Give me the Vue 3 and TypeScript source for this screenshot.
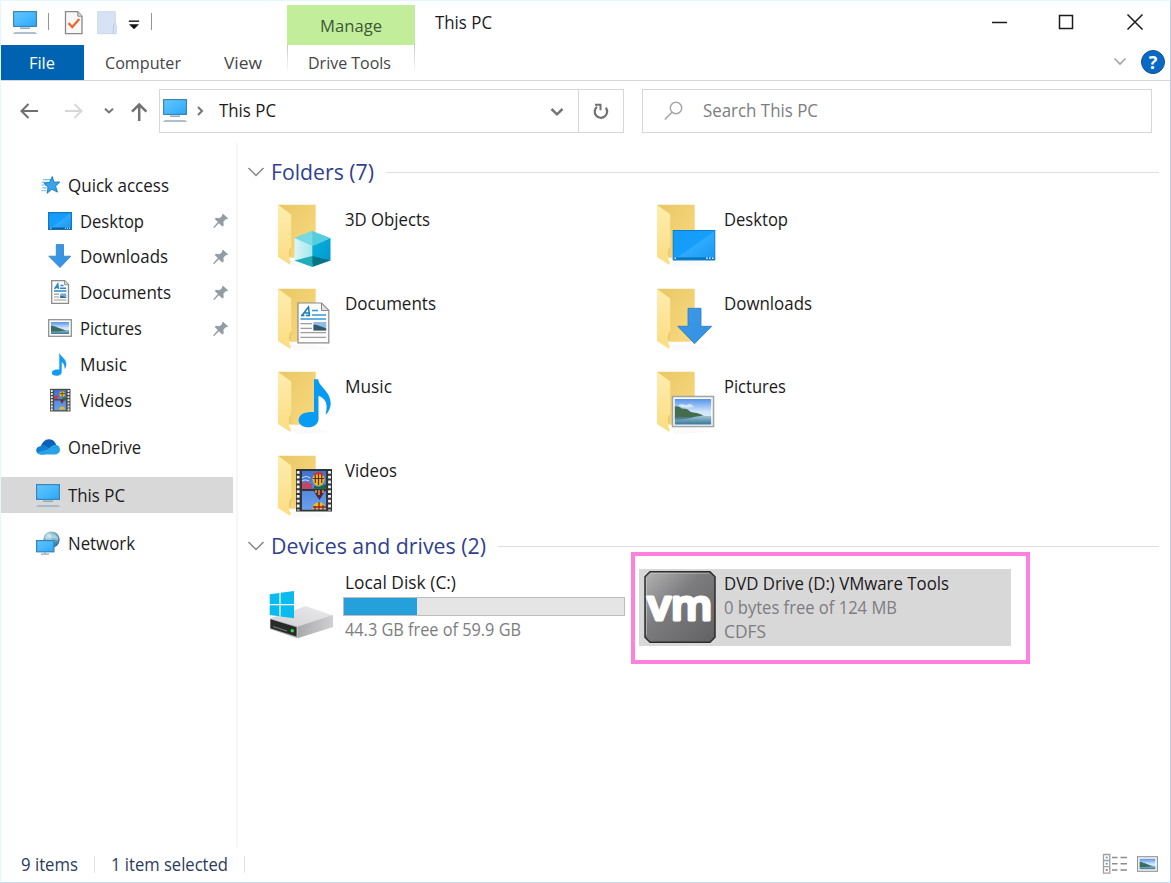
<script setup lang="ts">
interface NavItem {
  label: string
  icon: string
  width: number
  nested?: boolean
  pinned?: boolean
  selected?: boolean
  spaced?: boolean
}

interface Folder {
  label: string
  icon: string
  width: number
}

const navItems: NavItem[] = [
  { label: 'Quick access', icon: 'i-star', width: 101 },
  { label: 'Desktop', icon: 'i-desk', width: 64, nested: true, pinned: true },
  { label: 'Downloads', icon: 'i-down', width: 88, nested: true, pinned: true },
  { label: 'Documents', icon: 'i-doc', width: 91, nested: true, pinned: true },
  { label: 'Pictures', icon: 'i-pic', width: 62, nested: true, pinned: true },
  { label: 'Music', icon: 'i-music', width: 47, nested: true },
  { label: 'Videos', icon: 'i-video', width: 52, nested: true },
  { label: 'OneDrive', icon: 'i-cloud', width: 73, spaced: true },
  { label: 'This PC', icon: 'i-pc', width: 57, spaced: true, selected: true },
  { label: 'Network', icon: 'i-net', width: 67, spaced: true },
]

const folders: Folder[] = [
  { label: '3D Objects', icon: 'b-cube', width: 85 },
  { label: 'Desktop', icon: 'b-desk', width: 64 },
  { label: 'Documents', icon: 'b-doc', width: 91 },
  { label: 'Downloads', icon: 'b-down', width: 88 },
  { label: 'Music', icon: 'b-music', width: 47 },
  { label: 'Pictures', icon: 'b-pic', width: 62 },
  { label: 'Videos', icon: 'b-video', width: 52 },
]

const usedPercent = 26.2

// Condenses a label horizontally so that it fills the given width.
const vFit = {
  mounted(el: HTMLElement, binding: { value: number }) {
    const natural = el.getBoundingClientRect().width
    if (!natural) return
    el.style.transform = `scaleX(${binding.value / natural})`
    el.style.marginRight = `${binding.value - natural}px`
  },
}
</script>

<template>
  <div class="window">
    <svg class="defs" width="0" height="0">
      <defs>
        <linearGradient id="screen" x1="0" y1="0" x2="1" y2="1">
          <stop offset="0" stop-color="#62c5fd" /><stop offset=".5" stop-color="#48b9ff" /><stop offset="1" stop-color="#2aa6f8" />
        </linearGradient>
        <linearGradient id="deskfill" x1="0" y1="0" x2="1" y2="1">
          <stop offset="0" stop-color="#129cf8" /><stop offset=".5" stop-color="#159ffb" /><stop offset=".52" stop-color="#2eabff" /><stop offset="1" stop-color="#1597f2" />
        </linearGradient>
        <linearGradient id="fback" x1="0" y1="0" x2="1" y2="1">
          <stop offset="0" stop-color="#e9c765" /><stop offset="1" stop-color="#f9da80" />
        </linearGradient>
        <linearGradient id="ffront" x1="0" y1="0" x2="0" y2="1">
          <stop offset="0" stop-color="#ffedaf" /><stop offset="1" stop-color="#fbdc80" />
        </linearGradient>
        <linearGradient id="bluearrow" x1="0" y1="0" x2="1" y2="1">
          <stop offset="0" stop-color="#3b9ae6" /><stop offset="1" stop-color="#3590e2" />
        </linearGradient>
        <linearGradient id="sky" x1="0" y1="0" x2="0" y2="1">
          <stop offset="0" stop-color="#5792eb" /><stop offset=".5" stop-color="#cfe7fa" /><stop offset="1" stop-color="#e8f3f7" />
        </linearGradient>
        <linearGradient id="lake" x1="0" y1="0" x2="0" y2="1">
          <stop offset="0" stop-color="#9fc3cf" /><stop offset="1" stop-color="#36779b" />
        </linearGradient>
        <linearGradient id="film" x1="0" y1="0" x2="0" y2="1">
          <stop offset="0" stop-color="#3f72d0" /><stop offset="1" stop-color="#6ba0ec" />
        </linearGradient>
        <linearGradient id="cubeL" x1="0" y1="0" x2="1" y2="0">
          <stop offset="0" stop-color="#daf6f8" /><stop offset="1" stop-color="#a3e7ef" />
        </linearGradient>
        <linearGradient id="cubeR" x1="0" y1="0" x2="1" y2="1">
          <stop offset="0" stop-color="#00b7dc" /><stop offset="1" stop-color="#0592cf" />
        </linearGradient>
        <linearGradient id="vmfill" x1="0" y1="0" x2="1" y2="1">
          <stop offset="0" stop-color="#b4b4b5" /><stop offset=".42" stop-color="#7c7c7e" /><stop offset="1" stop-color="#616163" />
        </linearGradient>
        <linearGradient id="driveSide" x1="0" y1="0" x2="1" y2="0">
          <stop offset="0" stop-color="#a9a9ac" /><stop offset="1" stop-color="#d0d0d3" />
        </linearGradient>
        <linearGradient id="driveTop" x1="0" y1="1" x2="1" y2="0">
          <stop offset="0" stop-color="#d2d2d5" /><stop offset="1" stop-color="#ebebed" />
        </linearGradient>
        <radialGradient id="globe" cx=".4" cy=".3" r=".8">
          <stop offset="0" stop-color="#d5edf1" /><stop offset=".4" stop-color="#78b1c9" /><stop offset="1" stop-color="#1f608f" />
        </radialGradient>
      </defs>

      <symbol id="i-pc" viewBox="0 0 24 24">
        <rect x=".6" y="1.6" width="22.8" height="14.8" fill="url(#screen)" stroke="#3c86b5" stroke-width="1.2" />
        <path d="M7 18.2h10" stroke="#87a9bf" stroke-width="1.5" />
        <path d="M2 22.600h20l1.500 1H.5z" fill="#b6c5d2" stroke="#9fb1c1" stroke-width=".8" />
      </symbol>
      <symbol id="i-star" viewBox="-4 -1.500 27 27">
        <path d="M4 6h9M2.800 9h7M2 12h7M3 15.200h6M1.800 18.500h6" stroke="#7fc0ec" stroke-width="1.300" />
        <path d="M14.300 2.500l1.900 6.300 6.500-.2-4.700 4.700 2.100 6.700-6.200-3.300-5.400 4.600 1.200-7-4.800-4.300 6.200-.8z" fill="#3aa4ea" stroke="#1c7cc3" stroke-width="1.100" />
      </symbol>
      <symbol id="i-desk" viewBox="0 0 24 24">
        <rect x=".6" y="3.600" width="22.800" height="16.800" fill="url(#deskfill)" stroke="#1277c0" stroke-width="1.200" />
        <path d="M1 19.300h22" stroke="#125d96" stroke-width="1.600" />
        <path d="M2 19.200h1.500M17 19.200h1.200M19 19.200h1.200M21 19.200h1.200" stroke="#e2f3ff" stroke-width="1" />
      </symbol>
      <symbol id="i-down" viewBox="0 0 24 24">
        <path d="M8.300.6h7.200v11.600h7.300L12 23.500.8 12.200h7.500z" fill="url(#bluearrow)" stroke="#2e7ec9" stroke-width=".8" />
      </symbol>
      <symbol id="i-doc" viewBox="0 0 24 24">
        <path d="M3.700.7h13l3.800 3.800v18.800H3.700z" fill="#fdfdfd" stroke="#8b8b8b" stroke-width="1.300" />
        <path d="M16.500.7v4h4" fill="#ddd" stroke="#8b8b8b" stroke-width=".9" />
        <path d="M6.500 9l3.300-5 .7 5M7.800 7.500H10M12.500 5.500h3M12 8.300h6M6 11h12.500" fill="none" stroke="#2687c6" stroke-width="1.400" />
        <path d="M6 14.200h5M6 17h5M6 20h12.500" stroke="#9a9a9a" stroke-width="1.200" />
        <path d="M12.300 13.500h6V18h-6z" fill="#73aada" /><path d="M12.300 15.500l6 2V18h-6z" fill="#376574" />
      </symbol>
      <symbol id="i-pic" viewBox="0 0 24 24">
        <rect x=".7" y="3.700" width="22.600" height="16.600" fill="#fff" stroke="#8e9191" stroke-width="1.300" />
        <path d="M3 6h18v12H3z" fill="url(#sky)" /><path d="M3 14h18v4H3z" fill="url(#lake)" />
        <path d="M3 9.500c3 .2 5 1.800 8 2.500l7 2.500-8 1H3z" fill="#396c5b" />
      </symbol>
      <symbol id="i-music" viewBox="0 0 24 24">
        <path d="M11.300.5c1 4.500 7 5.500 7 11.800 0 2-.6 3.500-1.600 5 0-4-1.200-6.300-3-7v9.600c0 2.300-2.400 3.800-5.200 3.800-2.700 0-4.700-1.200-4.700-3 0-2.300 3.500-3.900 7.500-3.100z" fill="#119bf2" />
      </symbol>
      <symbol id="i-video" viewBox="0 0 24 24">
        <path d="M2 .8h20.500v22.700H2z" fill="#4b4c4e" />
        <path d="M3.800 2v20.500M20.500 2v20.500" stroke="#ededed" stroke-width="1.800" stroke-dasharray="1.900 1.200" />
        <path d="M6.200 2h11.700v9H6.200zM6.200 12.500h11.700v9.800H6.200z" fill="url(#film)" />
        <path d="M6 8.500l4-1.500v4H6z" fill="#b93f62" /><path d="M15 9h3v2.300h-4z" fill="#267345" />
        <ellipse cx="14.200" cy="5.900" rx="2.700" ry="3" fill="#e5bd19" /><path d="M14.200 3v6M12 5.500h5" stroke="#7d3f21" stroke-width=".9" />
        <path d="M12 12h4l-2 4z" fill="#7b2636" /><path d="M11 21.500c0-4 6-4 6 0z" fill="#e5bd19" />
      </symbol>
      <symbol id="i-cloud" viewBox="0 0 24 24">
        <path d="M4.500 13C5.500 7.500 9 4 13.200 4.200c3.800.1 6.200 2.700 7 5.800L13 15z" fill="#0b61b9" />
        <path d="M4.200 11.200c3-1.500 5.300-.8 7.500.7l6 4.500-10 3H5C1.800 19.400.2 17.500.2 15.200c0-2.200 1.700-3.800 4-4z" fill="#117ed3" />
        <path d="M11.500 14.500c3-2.400 4.600-4.800 7.800-4.700 3 .1 4.700 2.300 4.700 5 0 2.800-2 4.600-4.700 4.600H5c-2 0-3.200-.8-4-2z" fill="#27a2e7" />
      </symbol>
      <symbol id="i-net" viewBox="0 0 24 24">
        <circle cx="15.500" cy="8.600" r="8.200" fill="url(#globe)" />
        <path d="M11 2c2 1 3.500.8 4 3l-3 1-1 3-3-2zM18 3l4 3v4l-3-2-2-2z" fill="#dceee8" opacity=".5" />
        <rect x=".6" y="9.600" width="17.300" height="11.200" fill="url(#screen)" stroke="#3982b3" stroke-width="1.200" />
        <path d="M9 21v1.800M5 23.200h8" stroke="#91a9b7" stroke-width="1.300" />
      </symbol>
      <symbol id="i-pin" viewBox="0 0 16 16">
        <path d="M10 .8l5.200 4.700-1.300.8-1.300-.1-2.200 2.600.3 3.600-1.400 1.100-3.500-3.300-4.500 4.900-.8-.1 0-.9 4.300-5L1.700 6l1.200-1.300 3.600.5 2.600-2.300-.1-1.200z" fill="#929ca4" />
      </symbol>

      <symbol id="b-folder" viewBox="0 0 62 66">
        <path d="M13 57l21-1 20 5-36 2z" fill="#000" opacity=".02" />
        <path d="M1 .8h37.700v53H13z" fill="url(#fback)" />
        <path d="M1 .8l13.200 9.700v34L12.500 47v9.500l1 .5v4L1 53z" fill="url(#ffront)" />
        <path d="M14.200 44l-1.500 3v6" fill="none" stroke="#ddbd62" stroke-width=".8" />
      </symbol>
      <symbol id="b-cube" viewBox="0 0 62 66">
        <path d="M17.500 34l17.800-7 18.200 7-18.200 8z" fill="#56cddd" /><path d="M17.500 34l17.800-7v15z" fill="#76d9e4" />
        <path d="M17.500 34l17.800 8v16l-17.800-1z" fill="url(#cubeL)" />
        <path d="M35.300 42l18.200-8v22.500L35.300 60z" fill="url(#cubeR)" />
        <path d="M17.500 56.500L35.300 52v11z" fill="#20acb8" /><path d="M35.300 52l18.200 4.500L35.300 63z" fill="#087384" />
      </symbol>
      <symbol id="b-desk" viewBox="0 0 62 66">
        <rect x="17.200" y="26.500" width="41.600" height="29.500" fill="url(#deskfill)" stroke="#0e7cc6" />
        <path d="M17.500 54.500h41" stroke="#0870b5" stroke-width="2" />
        <path d="M18.500 54.200h1.500M50.200 54.200h1.500M53 54.200h1.500M56 54.200h1.500" stroke="#dff4ff" stroke-width="1.500" />
      </symbol>
      <symbol id="b-doc" viewBox="0 0 62 66">
        <path d="M21 15h23.500l7.300 7.500v32.300H21z" fill="#fcfcfd" stroke="#8a8a8c" stroke-width="1.200" />
        <path d="M44.500 15v7.500h7.300z" fill="#e3e3e3" stroke="#8a8a8c" />
        <path d="M24 27.500h3.500M29 27.500h4M25 27.500l6.500-8.500 1 8.500M27.800 25h4.200" fill="none" stroke="#197cbe" stroke-width="1.500" />
        <path d="M35 22.500h6M35 27h14M23.500 31h25.500" stroke="#3398d4" stroke-width="1.400" />
        <path d="M23.500 35.600h11.500M23.500 40.300h11.500M23.500 44.700h25.500M23.500 49.300h25.500" stroke="#9c9da0" stroke-width="1.200" />
        <path d="M36.500 34h12.700v8.500H36.500z" fill="#8fbde9" /><path d="M36.500 36.500c4 .5 8 2 12.700 4v2H36.500z" fill="#365766" />
      </symbol>
      <symbol id="b-down" viewBox="0 0 62 66">
        <path d="M32 20.300h13v18h10.700L38.600 55.700 21.700 38.300H32z" fill="url(#bluearrow)" stroke="#287bc7" stroke-width=".8" />
      </symbol>
      <symbol id="b-music" viewBox="0 0 62 66">
        <path d="M37 8.200h4.200c.5 7.500 12.500 12 12.500 24.300 0 4-1.600 7.700-4.700 11l-.3-.7c2.700-10.500-.7-15.500-7.200-18V48c0 4.800-4.500 8.300-10.200 8.300-5.500 0-9.700-2.700-9.700-7 0-5.400 6.500-9.300 15.400-8z" fill="#079bf4" />
      </symbol>
      <symbol id="b-pic" viewBox="0 0 62 66">
        <rect x="16.500" y="25.500" width="41" height="30" fill="#fff" stroke="#a2a5a7" stroke-width="1.600" />
        <path d="M18.800 28h36.400v25.500H18.800z" fill="url(#sky)" />
        <path d="M18.800 45h36.400v8.500H18.800z" fill="url(#lake)" />
        <path d="M22 35c4-4 7 1 11-2 3 0 4 2 5 3-6 1-12 1-16-1z" fill="#edf6fd" opacity=".7" />
        <path d="M18.800 35.500c3-.5 5 .5 7 2l5 .5 4 3 7 1.200 6 2.300-12 1.700H18.800z" fill="#446d50" />
        <path d="M18.800 46c8 0 12-.5 20-.5-4 2-10 3-20 3z" fill="#3e6870" opacity=".7" />
      </symbol>
      <symbol id="b-video" viewBox="0 0 62 66">
        <path d="M19 14h36v42.500H19z" fill="#333437" />
        <path d="M21.200 16v39.500M52.500 16v39.500" stroke="#f3f3f3" stroke-width="2.800" stroke-dasharray="2.800 2" />
        <path d="M25 16h24v17.700H25zM25 36h24v18.800H25z" fill="url(#film)" />
        <path d="M25 23q4-3 8 0M25 26q3-2 7 0" stroke="#c4dcf7" stroke-width="1.200" fill="none" />
        <path d="M25 27l3 1 2-2 2 3 3-1v5.700H25z" fill="#c34667" /><path d="M37 33.700V31l5 1 7-3v4.700z" fill="#17693c" />
        <ellipse cx="41.500" cy="24.300" rx="6" ry="6.500" fill="#f0bd1b" />
        <path d="M41.500 18v12M38.300 20v8M44.700 20v8M36 23.500h11" stroke="#632d25" stroke-width="1.200" /><path d="M37 20q4.500-4 9 0" stroke="#d62d2c" stroke-width="2" fill="none" />
        <path d="M36.500 35h12l-3.500 6-2.500 4-3-4z" fill="#4d283d" /><path d="M39 35v3M42 35v5M46 35v3" stroke="#df9632" stroke-width="1.600" />
        <path d="M35.500 54c0-9 13-9 13 0z" fill="#efbd1d" /><path d="M38 51v4M42 47v8M46 50v5M36 52h13" stroke="#8e292b" stroke-width="1.300" />
      </symbol>
    </svg>

    <header class="titlebar">
      <div class="quick-tools">
        <svg class="ico24"><use href="#i-pc" /></svg>
        <i class="sep sep-a"></i>
        <svg class="tool-check" width="20" height="26" viewBox="0 0 20 26">
          <path d="M1.500 1.700h12.300l4.200 4.500v17.500H1.500z" fill="#f8f8f8" stroke="#888" stroke-width="1.300" />
          <path d="M13.800 1.700v4.500H18" fill="#ddd" stroke="#888" />
          <path d="M4.500 13.200l3.800 3.800L15.300 9" fill="none" stroke="#ed6b31" stroke-width="2.400" />
        </svg>
        <svg class="tool-new" width="20" height="26" viewBox="0 0 20 26">
          <path d="M.7 1.700h17.600v12.500l1 1v8.500H.7z" fill="#d7e3f5" stroke="#cbd8ea" /><path d="M18.300 13l-2 3v7.700" fill="none" stroke="#b9cbe3" />
        </svg>
        <svg class="tool-more" width="12" height="10" viewBox="0 0 12 10"><path d="M.8 1.200h10.400" stroke="#222" stroke-width="1.500" /><path d="M1 4.200h10L6 9.200z" fill="#111" /></svg>
        <i class="sep sep-b"></i>
      </div>
      <div class="manage"><span v-fit="62" class="t small">Manage</span></div>
      <div class="title"><span v-fit="57" class="t">This PC</span></div>
      <svg class="controls" width="140" height="44" viewBox="0 0 140 44" fill="none" stroke="#1b1b1b" stroke-width="1.500">
        <path d="M2 21.500h15" /><rect x="69.500" y="14.500" width="13" height="13" /><path d="M137.500 13.500l15 15M152.500 13.500l-15 15" />
      </svg>
    </header>

    <nav class="ribbon">
      <div class="tab file"><span v-fit="26" class="t small">File</span></div>
      <div class="tab computer"><span v-fit="76" class="t small">Computer</span></div>
      <div class="tab view"><span v-fit="38" class="t small">View</span></div>
      <div class="tab drive"><span v-fit="83" class="t small">Drive Tools</span></div>
      <div class="ribbon-end">
        <svg width="14" height="9" viewBox="0 0 14 9"><path d="M1.500 1.500L7 7l5.500-5.500" fill="none" stroke="#a5a5a5" stroke-width="1.700" /></svg>
        <div class="help">?</div>
      </div>
    </nav>

    <div class="address-row">
      <svg width="159" height="44" viewBox="0 0 159 44" fill="none" stroke="#707070">
        <path d="M38 22H21.500M28.500 15l-7 7 7 7" stroke-width="2.100" />
        <path d="M65 22h16.500M74.500 15l7 7-7 7" stroke="#d7d7d7" stroke-width="2" />
        <path d="M105 19.700l4 3.700 4-3.700" stroke-width="1.900" />
        <path d="M139.200 32V15.500M132 22.700l7.200-7.200 7.200 7.200" stroke-width="2.500" />
      </svg>
      <div class="address">
        <svg class="ico24 addr-pc"><use href="#i-pc" /></svg>
        <svg class="crumb" width="8" height="12" viewBox="0 0 8 12"><path d="M2 2l4 4-4 4" fill="none" stroke="#777" stroke-width="2.100" /></svg>
        <span v-fit="57" class="t up">This PC</span>
        <svg class="addr-drop" width="16" height="12" viewBox="0 0 16 12"><path d="M2.500 4l5.500 5.300L13.500 4" fill="none" stroke="#757575" stroke-width="2.500" /></svg>
        <div class="refresh">
          <svg width="18" height="20" viewBox="0 0 18 20"><path d="M5 5.800A6.200 6.200 0 1 0 13.800 6.800" fill="none" stroke="#707070" stroke-width="2.200" /><path d="M3 3.800h5.500v5.500" fill="none" stroke="#707070" stroke-width="2" /></svg>
        </div>
      </div>
      <div class="search">
        <svg width="22" height="22" viewBox="0 0 22 22"><circle cx="13" cy="8" r="5.700" fill="none" stroke="#a5a5a5" stroke-width="1.500" /><path d="M9 12.300L1.800 19.500" stroke="#a5a5a5" stroke-width="1.500" /></svg>
        <span v-fit="115" class="t muted up">Search This PC</span>
      </div>
    </div>

    <div class="body">
      <aside class="sidebar">
        <div v-for="item in navItems" :key="item.label" class="nav-row" :class="{ nested: item.nested, selected: item.selected, spaced: item.spaced }">
          <svg class="ico24"><use :href="'#' + item.icon" /></svg>
          <span v-fit="item.width" class="t">{{ item.label }}</span>
          <svg v-if="item.pinned" class="pin"><use href="#i-pin" /></svg>
        </div>
      </aside>

      <main class="content">
        <div class="section-head">
          <svg width="18" height="12" viewBox="0 0 18 12"><path d="M1.500 2L9 9.500 16.500 2" fill="none" stroke="#858585" stroke-width="1.500" /></svg>
          <span v-fit="103" class="t head">Folders (7)</span>
          <i class="rule"></i>
        </div>
        <div class="folders">
          <div v-for="folder in folders" :key="folder.label" class="folder">
            <svg class="folder-ico"><use href="#b-folder" /><use :href="'#' + folder.icon" /></svg>
            <span v-fit="folder.width" class="t">{{ folder.label }}</span>
          </div>
        </div>
        <div class="section-head">
          <svg width="18" height="12" viewBox="0 0 18 12"><path d="M1.500 2L9 9.500 16.500 2" fill="none" stroke="#858585" stroke-width="1.500" /></svg>
          <span v-fit="215" class="t head">Devices and drives (2)</span>
          <i class="rule"></i>
        </div>
        <div class="drives">
          <div class="disk">
            <svg width="66" height="50" viewBox="0 0 66 50">
              <path d="M1 28.500L36.500 16 64 25.500 28.500 36.500z" fill="url(#driveTop)" />
              <path d="M28.500 36.500L64 25v12L28.500 48.300z" fill="url(#driveSide)" />
              <path d="M1 28.500l27.500 8v11.800L1 39z" fill="#aaaaad" /><path d="M1.500 29.200l26 8v9.300l-26-8.300z" fill="#272a29" />
              <path d="M4 36.500l14 4.500" stroke="#747978" stroke-width="1.200" /><circle cx="23.300" cy="40.700" r="1.800" fill="#32d947" />
              <path d="M.7 4.200l9.700-1.300v11.200H.7zM11.600 2.700l13.400-1.800v13.200H11.600zM.7 15.300h9.700v11l-9.700-1.200zM11.600 15.300H25v12.900l-13.400-1.700z" fill="#0abbf0" />
            </svg>
            <div class="disk-info">
              <span v-fit="111" class="t line">Local Disk (C:)</span>
              <div class="bar"><div class="fill" :style="{ width: usedPercent + '%' }"></div></div>
              <span v-fit="176" class="t line muted">44.3 GB free of 59.9 GB</span>
            </div>
          </div>
          <div class="highlight">
            <div class="dvd">
              <svg width="72" height="72" viewBox="1 1 72 72">
                <path d="M7 1.800h60l5 5v60.400l-5 5H7l-5-5V6.800z" fill="url(#vmfill)" stroke="#2c2c2e" stroke-width="1.500" stroke-linejoin="round" />
                <path d="M8 3.300h58M3.500 8v57" stroke="#d8d8d8" stroke-width=".8" opacity=".6" />
                <text x="4.500" y="49.500" class="vm" textLength="65" lengthAdjust="spacingAndGlyphs">vm</text>
              </svg>
              <div class="dvd-info">
                <span v-fit="225" class="t">DVD Drive (D:) VMware Tools</span>
                <span v-fit="173" class="t muted">0 bytes free of 124 MB</span>
                <span v-fit="42" class="t muted">CDFS</span>
              </div>
            </div>
          </div>
        </div>
      </main>
    </div>

    <footer class="status">
      <span v-fit="57" class="t navy up">9 items</span>
      <i class="status-sep"></i>
      <span v-fit="117" class="t navy up">1 item selected</span>
      <i class="status-sep second"></i>
      <svg class="view-list" width="26" height="22" viewBox="0 0 26 22">
        <path d="M1.500 1.500h6.300v18.700H1.500zM1.500 7.500h6.300M1.500 13.700h6.300" fill="#fff" stroke="#a0a0a0" stroke-width="1.300" />
        <path d="M10 4.500h5.500M18.500 4.500H25M10 10.700h5.500M18.500 10.700H25M10 17h5.500M18.500 17H25" stroke="#8c8c8c" stroke-width="1.500" />
        <path d="M3.800 4.500h1.800" stroke="#86929c" stroke-width="1.800" /><path d="M3.800 10.700h1.800" stroke="#4b95de" stroke-width="1.800" /><path d="M3.800 17h1.800" stroke="#e25353" stroke-width="1.800" />
      </svg>
      <svg class="view-pic"><use href="#i-pic" /></svg>
    </footer>
  </div>
</template>

<style>
body { margin: 0; background: #fff; }
</style>

<style scoped>
* { box-sizing: border-box; }
svg { display: block; flex: none; }
.defs { position: absolute; }
.window {
  width: 1171px; height: 883px; overflow: hidden; display: flex; flex-direction: column;
  background: #fff; border: 1px solid #e2f8fc; border-right-color: #b6cdf1; border-bottom-color: #c6dcf1;
  font-family: "Open Sans", "Noto Sans", sans-serif; font-size: 17.500px; color: #1c1a1d;
}
.t { display: inline-block; flex: none; white-space: nowrap; transform-origin: 0 50%; line-height: 24px; }
.small { font-size: 16.500px; color: #454548; }
.muted { color: #7d7d80; }
.navy { color: #2a3b5c; }
.up { margin-top: -2px; }
.ico24 { width: 24px; height: 24px; }
.titlebar { height: 44px; display: flex; flex: none; }
.quick-tools { width: 286px; display: flex; align-items: flex-start; padding: 9px 0 0 12px; }
.sep { width: 1px; height: 17px; background: #959595; margin-top: 3px; flex: none; }
.sep-a { margin-left: 11px; }
.tool-check { margin-left: 15px; }
.tool-new { margin-left: 13px; }
.tool-more { margin: 10px 0 0 11px; }
.sep-b { margin-left: 11px; }
.manage { width: 128px; height: 40px; margin-top: 4px; background: #c2ee9b; padding: 8px 0 0 33px; }
.manage .t { color: #3e5937; }
.title { padding: 9px 0 0 20px; width: 575px; }
.controls { overflow: visible; }
.ribbon { height: 36px; flex: none; display: flex; border-bottom: 1px solid #d8d8d8; }
.tab { height: 35px; padding-top: 5px; flex: none; }
.file { width: 83px; background: #0063b1; padding-left: 28px; }
.file .t { color: #fff; }
.computer { width: 140px; padding-left: 21px; }
.view { width: 63px; }
.drive { width: 128px; height: 27px; padding-left: 20px; border: solid; border-width: 0 1px; border-image: linear-gradient(#c5c5c5, #fff) 1; }
.ribbon-end { flex: 1; display: flex; align-items: center; justify-content: flex-end; gap: 14px; padding: 0 5px 2px 0; }
.help { width: 24px; height: 24px; border-radius: 50%; background: #0869c6; border: 1px solid #14528b; color: #fff; font-size: 18px; line-height: 22px; text-align: center; font-weight: 700; }
.address-row { height: 44px; margin: 8px 0 10px -1px; display: flex; flex: none; }
.address { width: 465px; border: 1px solid #d6d6d6; display: flex; align-items: center; padding-left: 3px; }
.addr-pc { margin-top: -3px; }
.crumb { margin: 0 15px 0 9px; }
.addr-drop { margin-left: auto; }
.refresh { width: 45px; height: 42px; margin-left: 13px; border-left: 1px solid #d6d6d6; display: flex; align-items: center; justify-content: center; }
.search { width: 510px; margin-left: 18px; border: 1px solid #d6d6d6; display: flex; align-items: center; padding-left: 20px; gap: 18px; }
.body { height: 704px; flex: none; display: flex; }
.sidebar { width: 237px; border-right: 2px solid #f6f6f6; padding-top: 24px; }
.nav-row { width: 232px; height: 35.800px; display: flex; align-items: center; padding-left: 35px; gap: 8px; }
.nav-row.nested { padding-left: 47px; }
.nav-row.spaced { margin-top: 12px; }
.nav-row.selected { background: #d8d8d8; }
.pin { width: 16px; height: 16px; margin: 1px 4px 0 auto; }
.content { flex: 1; padding: 14px 11px 0 9px; }
.section-head { height: 30px; display: flex; align-items: center; }
.section-head .t { margin-left: 6px; margin-top: -2px; }
.head { font-size: 22px; line-height: 30px; color: #30418f; }
.rule { height: 1px; background: #dfdfdf; flex: 1; margin-left: 12px; }
.folders { display: grid; grid-template-columns: 379px 379px; grid-auto-rows: 83.500px; margin: 16px 0 -22px 30px; height: 350px; }
.folder { display: flex; gap: 6px; align-items: flex-start; padding-top: 1px; }
.folder-ico { width: 62px; height: 66px; }
.folder .t { margin-top: 3px; }
.drives { display: flex; height: 120px; }
.disk { width: 384px; display: flex; padding: 9px 0 0 22px; gap: 8px; }
.disk > svg { margin-top: 20px; }
.disk-info { width: 282px; display: flex; flex-direction: column; align-items: flex-start; }
.disk-info .t { margin-left: 2px; }
.bar { width: 282px; height: 19px; border: 1px solid #bdbdbd; background: #e5e5e5; margin: 3px 0 1px; }
.fill { height: 100%; background: #26a0da; }
.highlight { width: 399px; height: 112px; border: 4px solid #ff80df; padding: 13px 0 0 4px; margin: -9px 0 0 0; }
.dvd { width: 372px; height: 77px; background: #d8d8d8; display: flex; padding: 2px 0 0 5px; gap: 8px; }
.dvd-info { display: flex; flex-direction: column; align-items: flex-start; }
.vm { font-family: "Open Sans", sans-serif; font-size: 42px; font-weight: 600; fill: #fff; stroke: #fff; stroke-width: 3px; stroke-linejoin: round; }
.status { height: 35px; flex: none; display: flex; align-items: center; padding-left: 20px; }
.status-sep { width: 1px; height: 17px; background: #e3e3e3; margin: 0 16px; }
.view-list { margin: -2px 0 0 auto; }
.view-pic { width: 21px; height: 22px; margin: -2px 12px 0 9px; }
</style>
